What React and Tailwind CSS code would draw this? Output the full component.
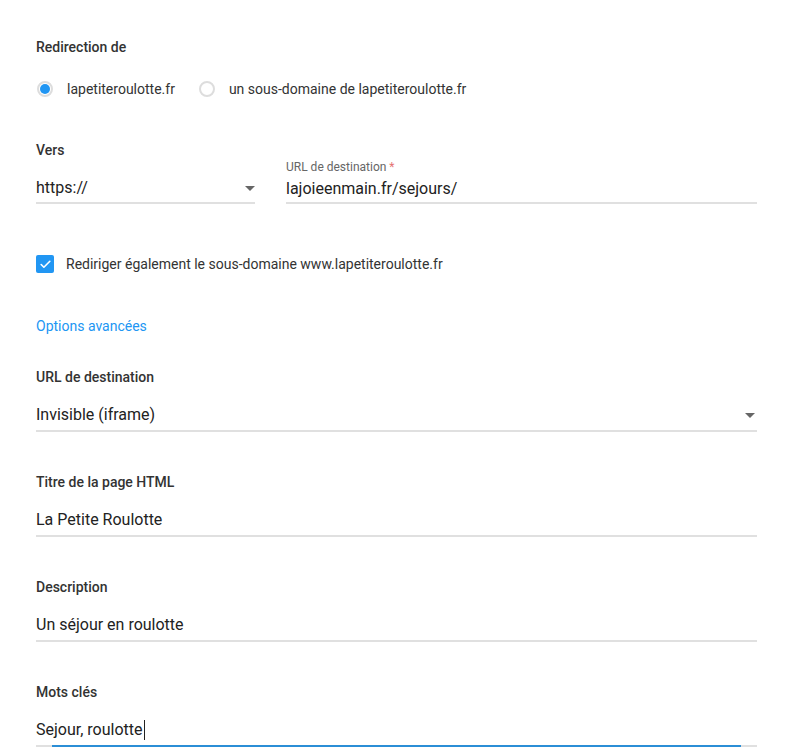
import { Check } from 'lucide-react';

const Label = ({ children }) => (
  <div className="h-5 text-[14px] leading-5 font-medium text-[#333]">{children}</div>
);

const Arrow = () => (
  <svg width="10" height="5" viewBox="0 0 10 5" className="text-[#666]">
    <path d="M0 0h10L5 5z" fill="currentColor" />
  </svg>
);

const Field = ({ label, value, select, focused }) => (
  <div className="flex flex-col">
    <Label>{label}</Label>
    <div className="relative mt-[16px] border-b-2 border-[#e0e0e0] pb-[3px]">
      <div className="flex items-center justify-between h-6">
        <span className="text-[16px] leading-6 text-[#222] flex items-center">
          {value}
          {focused && <span className="inline-block w-px h-5 bg-[#222] ml-px" />}
        </span>
        {select && (
          <span className="mr-[2px]">
            <Arrow />
          </span>
        )}
      </div>
      {focused && (
        <div className="absolute left-4 right-4 -bottom-[2px] h-[2px] bg-[#2b8ed6]" />
      )}
    </div>
  </div>
);

const Radio = ({ checked, children }) => (
  <label className="flex items-center gap-[14px] text-[14px] text-[#333]">
    <span className="w-4 h-4 rounded-full border-2 border-[#ddd] flex items-center justify-center">
      {checked && <span className="w-[10px] h-[10px] rounded-full bg-[#2196f3]" />}
    </span>
    {children}
  </label>
);

export default function App() {
  return (
    <div
      className="w-[786px] h-[754px] overflow-hidden bg-white pl-[36px] pr-[29px] pt-[37px] text-[#333]"
      style={{ fontFamily: 'Roboto, "Noto Sans", sans-serif' }}
    >
      {/* Redirection */}
      <Label>Redirection de</Label>
      <div className="mt-[22px] h-5 flex items-center gap-6 pl-px">
        <Radio checked>lapetiteroulotte.fr</Radio>
        <Radio>un sous-domaine de lapetiteroulotte.fr</Radio>
      </div>

      {/* Vers */}
      <div className="mt-[41px]">
        <Label>Vers</Label>
      </div>
      <div className="flex gap-[31px]">
        <div className="w-[219px] pt-[17px]">
          <div className="border-b-2 border-[#e0e0e0] pb-[3px] flex items-center justify-between h-[27px]">
            <span className="text-[16px] leading-6 text-[#222]">https://</span>
            <Arrow />
          </div>
        </div>
        <div className="flex-1">
          <div className="h-[17px] -mt-[1px] mb-[1px] text-[12px] leading-[17px] text-[#666]">
            URL de destination <span className="text-[#e57373]">*</span>
          </div>
          <div className="border-b-2 border-[#e0e0e0] pb-[3px] h-[27px]">
            <span className="text-[16px] leading-6 text-[#222]">lajoieenmain.fr/sejours/</span>
          </div>
        </div>
      </div>

      {/* Checkbox */}
      <div className="mt-[50px] h-5 flex items-center gap-3 text-[14px] text-[#333]">
        <span className="w-[18px] h-[18px] rounded-[2px] bg-[#2196f3] flex items-center justify-center">
          <Check className="w-[13px] h-[13px] text-white" strokeWidth={3} />
        </span>
        Rediriger également le sous-domaine www.lapetiteroulotte.fr
      </div>

      <div className="mt-[42px] h-5 text-[14px] leading-5 text-[#2196f3]">Options avancées</div>

      <div className="mt-[31px] flex flex-col gap-[40px]">
        <Field label="URL de destination" value="Invisible (iframe)" select />
        <Field label="Titre de la page HTML" value="La Petite Roulotte" />
        <Field label="Description" value="Un séjour en roulotte" />
        <Field label="Mots clés" value="Sejour, roulotte" focused />
      </div>
    </div>
  );
}
